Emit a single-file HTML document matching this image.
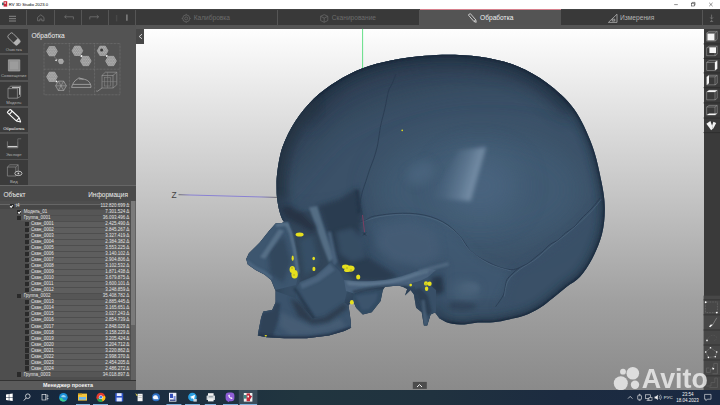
<!DOCTYPE html>
<html lang="ru">
<head>
<meta charset="utf-8">
<title>RV 3D Studio 2023.0</title>
<style>
*{box-sizing:border-box;margin:0;padding:0}
html,body{width:720px;height:405px;overflow:hidden;background:#fff}
body{position:relative;font-family:"Liberation Sans",sans-serif;color:#e6e6e6}
.abs{position:absolute}
#title{left:0;top:0;width:720px;height:9px;background:#fff}
#title .t{position:absolute;left:8.800px;top:1.500px;font-size:4.200px;line-height:6px;color:#000;white-space:nowrap}
#toolbar{left:0;top:8.6px;width:720px;height:16.2px;background:#393939;border-top:0.6px solid #444}
#strip{left:0;top:24.8px;width:720px;height:4.2px;background:#555}
.tb{position:absolute;top:0;height:16.2px;border-right:0.7px solid #555}
.tab{position:absolute;top:0;height:16.2px;border-right:0.7px solid #555;white-space:nowrap}
.tab span{position:absolute;top:4.6px;font-size:6.6px;line-height:8px;color:#6c6c6c}
#leftp{left:0;top:24.8px;width:136px;height:365.4px;background:#535353}
.sb{position:absolute;left:0;width:27.6px;height:24.6px;background:#3b3b3b}
.sb span{position:absolute;left:0;width:27.6px;text-align:center;bottom:1.400px;font-size:4.200px;line-height:5px;color:#b0b0b0;white-space:nowrap}
.sb.act span{color:#ffffff}
#view{left:136px;top:28.8px;width:567.6px;height:361.4px;background:linear-gradient(to bottom,#fefefe 0%,#e5e5e5 19.8%,#c3c3c3 47.5%,#a0a0a0 75.3%,#8a8a8a 100%)}
#rightp{left:703.6px;top:28.8px;width:16.4px;height:361.4px;background:#3a3a3a}
#task{left:0;top:390px;width:720px;height:15px;background:linear-gradient(to right,#15253b 0%,#1b2d40 20%,#21353f 42%,#20323f 60%,#1c2b40 78%,#1a2942 100%)}
/* tree */
#hdr{left:0;top:185.4px;width:136px;height:15.4px;background:#4a4a4a;border-top:0.6px solid #666}
#hdr span{position:absolute;top:4.600px;font-size:6.500px;line-height:8px;color:#ececec}
#treebg{left:0;top:200.8px;width:130.6px;height:179px;background:#4e4e4e}
#scroll{left:130.600px;top:200.800px;width:5.400px;height:179px;background:#626262}
.row{position:absolute;left:0;width:130.6px;height:6.01px;font-size:4.5px;line-height:6px;white-space:nowrap;color:#e4e4e4}
.row.l2:before{content:"";position:absolute;left:28px;right:0.6px;top:0.3px;bottom:0.3px;background:#5e5e5e}
.row.l1:before{content:"";position:absolute;left:21px;right:0.6px;top:0.3px;bottom:0.3px;background:#565656}
.row.l0:before{content:"";position:absolute;left:0;right:0.6px;top:0.3px;bottom:0.3px;background:#474747;border-top:0.5px solid #666}
.row .cb{position:absolute;top:0.900px;width:4.100px;height:4.100px;background:#2a2a2a}
.row .cb.on:after{content:"";position:absolute;left:0.900px;top:0.900px;width:2.200px;height:1.200px;border-left:0.700px solid #fff;border-bottom:0.700px solid #fff;transform:rotate(-45deg)}
.row .nm{position:absolute;top:0}
.row .nu{position:absolute;right:1.4px;top:0}
#mgr{left:0;top:380.4px;width:136px;height:9.8px;background:#5b5b5b;border-top:0.7px solid #333;text-align:center;font-size:5.4px;line-height:9px;font-weight:bold;color:#f4f4f4}
</style>
</head>
<body>
<div id="title" class="abs">
<svg class="abs" style="left:1.600px;top:1px" width="6" height="6" viewBox="0 0 6 6"><rect x="0" y="1.6" width="2.2" height="2.6" fill="#2e7d78"/><rect x="1.6" y="0.2" width="3.6" height="5.4" fill="#c8283a"/><path d="M2.4 1.2h1.6v1.6h-1.6z" fill="#fff" opacity=".8"/></svg>
<span class="t">RV 3D Studio 2023.0</span>
<svg class="abs" style="left:668px;top:0" width="52" height="9" viewBox="0 0 52 9" fill="none" stroke="#333" stroke-width="0.55"><path d="M6.2 4.6h3.6"/><rect x="23.4" y="3.2" width="2.8" height="2.8"/><path d="M24.2 3.2v-0.8h2.8v2.8h-0.8"/><path d="M41.2 2.8l3.4 3.4M44.6 2.8l-3.4 3.4"/></svg>
</div>

<div id="toolbar" class="abs">
<div class="tb" style="left:0;width:27.4px"></div>
<div class="tb" style="left:27.4px;width:27.2px"></div>
<div class="tb" style="left:54.6px;width:27.1px"></div>
<div class="tb" style="left:81.7px;width:27.1px"></div>
<div class="tb" style="left:108.8px;width:27.1px"></div>
<div class="tab" style="left:135.9px;width:141.9px"><span style="left:57.8px">Калибровка</span></div>
<div class="tab" style="left:277.8px;width:141.9px"><span style="left:54px">Сканирование</span></div>
<div class="tab" style="left:419.7px;width:141px;background:#545454;height:20.4px;border-top:0.9px solid #d6808c;top:-0.6px;border-right:none"><span style="left:60.4px;color:#f0f0f0;top:4.4px">Обработка</span></div>
<div class="tab" style="left:560.7px;width:142.4px"><span style="left:59.4px;color:#b4b4b4">Измерения</span></div>
<svg class="abs" style="left:0;top:0" width="720" height="16" viewBox="0 0 720 16" fill="none" stroke="#7a7a7a" stroke-width="0.7">
<path d="M9 6.300h7M9 8.700h7M9 11h7" stroke="#8e8e8e" stroke-width="0.9"/>
<path d="M37.6 10.8v-3.4l3.2-2.6l3.2 2.6v3.4h-2.2v-1.8h-2v1.8z"/>
<path d="M73.4 9.4v-2.6h-8.6M66.4 5.2l-1.8 1.6l1.8 1.6"/>
<path d="M89.8 9.4v-2.6h8.6M96.8 5.2l1.8 1.6l-1.8 1.6"/>
<path d="M116.6 5v6.4" stroke="#484848" stroke-width="1.4"/>
<path d="M126.9 4.6v6.2" stroke="#8c8c8c" stroke-width="1.3"/>
<!-- tab icons -->
<g stroke="#6c6c6c"><circle cx="186.2" cy="8.4" r="3.500"/><circle cx="186.2" cy="8.4" r="1.500"/><path d="M186.2 3.800v1.200M186.2 11.800v1.200M181.600 8.400h1.200M189.600 8.400h1.200"/></g>
<g stroke="#6c6c6c"><path d="M324.2 4.6l3.6 1.7v4.2l-3.6 1.8l-3.6-1.8v-4.2zM320.6 6.3l3.6 1.8l3.6-1.8M324.2 8.1v4.2"/></g>
<g stroke="#e6e6e6" stroke-width="0.8"><path d="M468.6 4.6l1.8-0.9l5.4 6.2l0.4 2.4l-2.2-0.8l-5.4-6.2zM473.8 11.4l1.8-1.4"/></g>
<g stroke="#c0c0c0" stroke-width="0.7"><path d="M608.4 12.4h8.6v-8.2zM612.2 11v-1.8h2.6v1.8z"/></g>
<g stroke="#8c8c8c" stroke-width="0.6"><path d="M711.6 4.6v4M710.2 7.4l1.4 1.6l1.4-1.6M710 11.4h3.2M711.6 9.6v1.8"/></g>
</svg>
</div>
<div id="strip" class="abs"></div>

<div id="leftp" class="abs"></div>
<div id="view" class="abs"></div>

<svg class="abs" style="left:0;top:0" width="720" height="405" viewBox="0 0 720 405">
<defs>
<clipPath id="sk"><path d="M284.0 222.0C283.6 221.3 282.5 220.1 281.7 218.0C280.9 215.9 279.7 212.5 279.0 209.5C278.3 206.5 277.7 203.2 277.3 200.0C276.9 196.8 276.6 194.5 276.6 190.0C276.6 185.5 276.2 180.2 277.2 173.0C278.2 165.8 279.4 155.7 282.5 147.0C285.6 138.3 290.2 129.1 295.5 121.0C300.8 112.9 307.2 105.1 314.0 98.5C320.8 91.9 328.5 86.5 336.5 81.5C344.5 76.5 352.8 72.0 362.0 68.5C371.2 65.0 381.5 62.4 392.0 60.3C402.5 58.2 414.5 56.7 425.0 55.8C435.5 54.9 444.5 54.4 455.0 54.8C465.5 55.2 477.5 56.0 488.0 58.0C498.5 60.0 508.2 62.3 518.0 66.5C527.8 70.7 537.7 75.9 547.0 83.0C556.3 90.1 566.5 98.7 574.0 109.0C581.5 119.3 587.4 132.8 592.0 145.0C596.6 157.2 599.4 171.5 601.5 182.0C603.6 192.5 604.7 199.3 604.8 208.0C604.9 216.7 604.1 225.5 602.0 234.0C599.9 242.5 595.7 251.9 592.0 259.0C588.3 266.1 584.2 272.1 580.0 276.7C575.8 281.3 571.2 283.2 566.7 286.7C562.2 290.2 557.8 294.3 553.3 297.8C548.8 301.3 544.8 304.8 540.0 307.8C535.2 310.8 529.6 313.7 524.4 315.6C519.2 317.5 514.1 318.3 508.9 319.4C503.7 320.5 498.5 321.7 493.3 322.2C488.1 322.7 482.6 322.2 477.8 322.6C473.0 323.0 469.2 324.3 464.4 324.4C459.6 324.4 453.0 323.9 448.9 322.9C444.8 321.9 441.1 319.2 439.5 318.5L435.0 312.5L430.6 314.4L427.2 325.6L423.9 325.6L421.7 312.2L416.1 307.8L413.9 294.4L410.6 290.0L405.0 295.6L407.2 288.9L402.8 286.7L398.3 285.6L385.0 286.7L382.8 290.0L380.6 301.1L371.7 312.2L362.8 314.4L356.1 307.8L352.8 300.0L348.5 305.6L350.6 320.0L351.1 327.8L344.4 331.1L328.9 335.6L306.7 338.2L284.4 338.2L266.7 337.3L257.8 335.6L258.9 328.9L261.1 317.8L263.3 311.6L272.2 310.0L275.6 302.2L275.6 291.1L271.1 280.0L264.4 274.4L255.6 270.0L247.8 264.4L246.2 258.9L248.9 253.3L260.0 242.2L268.9 231.1L275.6 223.5L282.0 223.0Z"/></clipPath>
<filter id="b2" x="-20%" y="-20%" width="140%" height="140%"><feGaussianBlur stdDeviation="2"/></filter>
<filter id="b4" x="-30%" y="-30%" width="160%" height="160%"><feGaussianBlur stdDeviation="4"/></filter>
<filter id="b8" x="-40%" y="-40%" width="180%" height="180%"><feGaussianBlur stdDeviation="8"/></filter>
<filter id="b14" x="-50%" y="-50%" width="200%" height="200%"><feGaussianBlur stdDeviation="14"/></filter>
<filter id="b1" x="-20%" y="-20%" width="140%" height="140%"><feGaussianBlur stdDeviation="0.9"/></filter>
<linearGradient id="zl" x1="0" x2="1"><stop offset="0" stop-color="#555"/><stop offset="0.12" stop-color="#7a70d6"/><stop offset="0.82" stop-color="#7a70d6"/><stop offset="1" stop-color="#555"/></linearGradient>
<filter id="desat" x="0" y="0" width="100%" height="100%" color-interpolation-filters="sRGB"><feColorMatrix type="matrix" values="0.99 0 0 0 0  0 0.945 0 0 0  0 0 0.925 0 0  0 0 0 1 0"/></filter>
</defs>
<path d="M362.6 28.8V69" stroke="#3fd86a" stroke-width="0.8" fill="none"/>
<path d="M178.5 194.7L277 197.4" stroke="url(#zl)" stroke-width="0.8" fill="none"/>
<text x="171.4" y="198.1" font-family="Liberation Sans, sans-serif" font-size="8.4" fill="#444">Z</text>
<g filter="url(#desat)">
<path d="M284.0 222.0C283.6 221.3 282.5 220.1 281.7 218.0C280.9 215.9 279.7 212.5 279.0 209.5C278.3 206.5 277.7 203.2 277.3 200.0C276.9 196.8 276.6 194.5 276.6 190.0C276.6 185.5 276.2 180.2 277.2 173.0C278.2 165.8 279.4 155.7 282.5 147.0C285.6 138.3 290.2 129.1 295.5 121.0C300.8 112.9 307.2 105.1 314.0 98.5C320.8 91.9 328.5 86.5 336.5 81.5C344.5 76.5 352.8 72.0 362.0 68.5C371.2 65.0 381.5 62.4 392.0 60.3C402.5 58.2 414.5 56.7 425.0 55.8C435.5 54.9 444.5 54.4 455.0 54.8C465.5 55.2 477.5 56.0 488.0 58.0C498.5 60.0 508.2 62.3 518.0 66.5C527.8 70.7 537.7 75.9 547.0 83.0C556.3 90.1 566.5 98.7 574.0 109.0C581.5 119.3 587.4 132.8 592.0 145.0C596.6 157.2 599.4 171.5 601.5 182.0C603.6 192.5 604.7 199.3 604.8 208.0C604.9 216.7 604.1 225.5 602.0 234.0C599.9 242.5 595.7 251.9 592.0 259.0C588.3 266.1 584.2 272.1 580.0 276.7C575.8 281.3 571.2 283.2 566.7 286.7C562.2 290.2 557.8 294.3 553.3 297.8C548.8 301.3 544.8 304.8 540.0 307.8C535.2 310.8 529.6 313.7 524.4 315.6C519.2 317.5 514.1 318.3 508.9 319.4C503.7 320.5 498.5 321.7 493.3 322.2C488.1 322.7 482.6 322.2 477.8 322.6C473.0 323.0 469.2 324.3 464.4 324.4C459.6 324.4 453.0 323.9 448.9 322.9C444.8 321.9 441.1 319.2 439.5 318.5L435.0 312.5L430.6 314.4L427.2 325.6L423.9 325.6L421.7 312.2L416.1 307.8L413.9 294.4L410.6 290.0L405.0 295.6L407.2 288.9L402.8 286.7L398.3 285.6L385.0 286.7L382.8 290.0L380.6 301.1L371.7 312.2L362.8 314.4L356.1 307.8L352.8 300.0L348.5 305.6L350.6 320.0L351.1 327.8L344.4 331.1L328.9 335.6L306.7 338.2L284.4 338.2L266.7 337.3L257.8 335.6L258.9 328.9L261.1 317.8L263.3 311.6L272.2 310.0L275.6 302.2L275.6 291.1L271.1 280.0L264.4 274.4L255.6 270.0L247.8 264.4L246.2 258.9L248.9 253.3L260.0 242.2L268.9 231.1L275.6 223.5L282.0 223.0Z" fill="#3c5670"/>
<g clip-path="url(#sk)">
<path d="M270 40H620V120C560 70 420 70 330 130L270 200Z" fill="#33475e" filter="url(#b14)" opacity="0.9"/>
<path d="M300.0 118.0C306.1 111.9 326.2 89.8 336.5 81.5C346.8 73.2 352.8 72.0 362.0 68.5C371.2 65.0 381.5 62.4 392.0 60.3C402.5 58.2 414.5 56.7 425.0 55.8C435.5 54.9 444.5 54.4 455.0 54.8C465.5 55.2 477.5 56.0 488.0 58.0C498.5 60.0 508.2 62.3 518.0 66.5C527.8 70.7 537.7 75.9 547.0 83.0C556.3 90.1 569.5 104.7 574.0 109.0" fill="none" stroke="#26384d" stroke-width="26" filter="url(#b8)" opacity="0.75"/>
<ellipse cx="480" cy="190" rx="105" ry="60" fill="#43607d" filter="url(#b14)" opacity="0.9"/>
<ellipse cx="480" cy="186" rx="40" ry="34" fill="#4e6d8c" filter="url(#b14)" opacity="0.75"/>
<linearGradient id="hl" gradientUnits="userSpaceOnUse" x1="438" y1="171" x2="479" y2="183"><stop offset="0" stop-color="#7c9cba" stop-opacity="0"/><stop offset="0.3" stop-color="#7c9cba" stop-opacity="0.12"/><stop offset="0.6" stop-color="#7c9cba" stop-opacity="0.42"/><stop offset="0.85" stop-color="#7c9cba" stop-opacity="0.8"/><stop offset="1" stop-color="#86a4c0" stop-opacity="0.95"/></linearGradient>
<path d="M458 150L486 147L470.500 201L432 198Z" fill="url(#hl)" filter="url(#b2)"/>
<ellipse cx="421" cy="173" rx="15" ry="11" transform="rotate(-30 421 173)" fill="#4c6a88" filter="url(#b4)" opacity="0.85"/>
<path d="M366 224C400 210 440 214 468 248C480 262 500 268 512 270L505 300L440 300L380 280Z" fill="#43607e" filter="url(#b4)" opacity="0.7"/>
<path d="M600 200C585 225 550 248 520 268C505 280 503 296 496 308L540 312L600 260Z" fill="#3a5470" filter="url(#b4)" opacity="0.8"/>
<ellipse cx="470" cy="288" rx="9" ry="5" fill="#55738f" filter="url(#b2)" opacity="0.85"/>
<ellipse cx="462" cy="306" rx="14" ry="5" fill="#2d435b" filter="url(#b2)" opacity="0.7"/>
<path d="M284.0 222.0C283.6 221.3 282.5 220.1 281.7 218.0C280.9 215.9 279.7 212.5 279.0 209.5C278.3 206.5 277.7 203.2 277.3 200.0C276.9 196.8 276.6 194.5 276.6 190.0C276.6 185.5 276.2 180.2 277.2 173.0C278.2 165.8 279.4 155.7 282.5 147.0C285.6 138.3 290.2 129.1 295.5 121.0C300.8 112.9 307.2 105.1 314.0 98.5C320.8 91.9 328.5 86.5 336.5 81.5C344.5 76.5 352.8 72.0 362.0 68.5C371.2 65.0 381.5 62.4 392.0 60.3C402.5 58.2 414.5 56.7 425.0 55.8C435.5 54.9 444.5 54.4 455.0 54.8C465.5 55.2 477.5 56.0 488.0 58.0C498.5 60.0 508.2 62.3 518.0 66.5C527.8 70.7 537.7 75.9 547.0 83.0C556.3 90.1 566.5 98.7 574.0 109.0C581.5 119.3 587.4 132.8 592.0 145.0C596.6 157.2 599.4 171.5 601.5 182.0C603.6 192.5 604.7 199.3 604.8 208.0C604.9 216.7 604.1 225.5 602.0 234.0C599.9 242.5 595.7 251.9 592.0 259.0C588.3 266.1 584.2 272.1 580.0 276.7C575.8 281.3 571.2 283.2 566.7 286.7C562.2 290.2 557.8 294.3 553.3 297.8C548.8 301.3 544.8 304.8 540.0 307.8C535.2 310.8 529.6 313.7 524.4 315.6C519.2 317.5 514.1 318.3 508.9 319.4C503.7 320.5 498.5 321.7 493.3 322.2C488.1 322.7 482.6 322.2 477.8 322.6C473.0 323.0 469.2 324.3 464.4 324.4C459.6 324.4 453.0 323.9 448.9 322.9C444.8 321.9 441.1 319.2 439.5 318.5L435.0 312.5L430.6 314.4L427.2 325.6L423.9 325.6L421.7 312.2L416.1 307.8L413.9 294.4L410.6 290.0L405.0 295.6L407.2 288.9L402.8 286.7L398.3 285.6L385.0 286.7L382.8 290.0L380.6 301.1L371.7 312.2L362.8 314.4L356.1 307.8L352.8 300.0L348.5 305.6L350.6 320.0L351.1 327.8L344.4 331.1L328.9 335.6L306.7 338.2L284.4 338.2L266.7 337.3L257.8 335.6L258.9 328.9L261.1 317.8L263.3 311.6L272.2 310.0L275.6 302.2L275.6 291.1L271.1 280.0L264.4 274.4L255.6 270.0L247.8 264.4L246.2 258.9L248.9 253.3L260.0 242.2L268.9 231.1L275.6 223.5L282.0 223.0Z" fill="none" stroke="#1f3045" stroke-width="8" filter="url(#b4)" opacity="0.85"/>
<path d="M284.0 222.0C283.6 221.3 282.5 220.1 281.7 218.0C280.9 215.9 279.7 212.5 279.0 209.5C278.3 206.5 277.7 203.2 277.3 200.0C276.9 196.8 276.6 194.5 276.6 190.0C276.6 185.5 276.2 180.2 277.2 173.0C278.2 165.8 279.4 155.7 282.5 147.0C285.6 138.3 290.2 129.1 295.5 121.0C300.8 112.9 307.2 105.1 314.0 98.5C320.8 91.9 328.5 86.5 336.5 81.5C344.5 76.5 352.8 72.0 362.0 68.5C371.2 65.0 381.5 62.4 392.0 60.3C402.5 58.2 414.5 56.7 425.0 55.8C435.5 54.9 444.5 54.4 455.0 54.8C465.5 55.2 477.5 56.0 488.0 58.0C498.5 60.0 508.2 62.3 518.0 66.5C527.8 70.7 537.7 75.9 547.0 83.0C556.3 90.1 566.5 98.7 574.0 109.0C581.5 119.3 587.4 132.8 592.0 145.0C596.6 157.2 599.4 171.5 601.5 182.0C603.6 192.5 604.7 199.3 604.8 208.0C604.9 216.7 604.1 225.5 602.0 234.0C599.9 242.5 595.7 251.9 592.0 259.0C588.3 266.1 584.2 272.1 580.0 276.7C575.8 281.3 571.2 283.2 566.7 286.7C562.2 290.2 557.8 294.3 553.3 297.8C548.8 301.3 544.8 304.8 540.0 307.8C535.2 310.8 529.6 313.7 524.4 315.6C519.2 317.5 514.1 318.3 508.9 319.4C503.7 320.5 498.5 321.7 493.3 322.2C488.1 322.7 482.6 322.2 477.8 322.6C473.0 323.0 469.2 324.3 464.4 324.4C459.6 324.4 453.0 323.9 448.9 322.9C444.8 321.9 441.1 319.2 439.5 318.5" fill="none" stroke="#17263a" stroke-width="2.2" filter="url(#b1)"/>
<path d="M283.0 216.0C282.3 214.8 279.8 211.6 278.9 208.9C277.9 206.2 277.7 203.2 277.3 200.0C276.9 196.8 276.6 194.5 276.6 190.0C276.6 185.5 276.2 180.2 277.2 173.0C278.2 165.8 279.4 155.7 282.5 147.0C285.6 138.3 290.2 129.1 295.5 121.0C300.8 112.9 310.9 102.2 314.0 98.5" fill="none" stroke="#27374a" stroke-width="22" filter="url(#b4)" opacity="0.7"/>
<g fill="none" stroke="#263a52" stroke-width="0.9" stroke-linejoin="round" opacity="0.75">
<path d="M396.0 74.0C395.3 75.7 393.2 81.2 392.0 84.0C390.8 86.8 389.7 87.0 388.5 91.0C387.3 95.0 386.2 102.5 385.0 108.0C383.8 113.5 382.0 119.3 381.0 124.0C380.0 128.7 379.6 132.3 379.0 136.0C378.4 139.7 378.2 142.3 377.4 146.0C376.6 149.7 375.2 154.2 374.0 158.0C372.8 161.8 371.3 164.7 370.0 168.5C368.7 172.3 367.2 177.2 366.0 181.0C364.8 184.8 363.6 187.2 362.6 191.0C361.6 194.8 360.1 200.2 360.0 204.0C359.9 207.8 362.3 211.0 362.0 214.0C361.7 217.0 358.7 220.7 358.0 222.0"/>
<path d="M358.0 222.0C359.0 221.8 361.8 221.8 364.0 221.0C366.2 220.2 368.5 217.9 371.0 217.0C373.5 216.1 375.0 215.9 379.0 215.3C383.0 214.7 389.8 213.8 395.0 213.5C400.2 213.2 405.2 213.1 410.0 213.3C414.8 213.6 419.5 214.1 424.0 215.0C428.5 215.9 433.0 217.3 437.0 219.0C441.0 220.7 444.7 222.7 448.0 225.0C451.3 227.3 454.2 230.3 456.7 232.8C459.2 235.3 461.1 237.4 463.0 240.0C464.9 242.6 466.1 245.6 468.4 248.3C470.7 251.0 473.8 253.7 477.0 256.0C480.2 258.3 484.1 260.2 487.8 262.0C491.5 263.8 495.1 265.7 499.0 267.0C502.9 268.3 507.7 269.5 511.0 269.7C514.3 269.9 517.7 268.3 519.0 268.0"/>
<path d="M600.0 198.0C598.7 199.7 595.2 204.5 592.0 208.0C588.8 211.5 584.0 215.8 581.0 219.0C578.0 222.2 576.6 224.7 574.0 227.0C571.4 229.3 568.3 230.6 565.6 232.8C562.9 235.0 560.6 238.1 558.0 240.0C555.4 241.9 552.7 242.5 550.0 244.5C547.3 246.5 544.6 249.8 542.0 252.0C539.4 254.2 537.0 256.0 534.5 258.0C532.0 260.0 529.6 262.4 527.0 264.0C524.4 265.6 521.5 266.1 519.0 267.8C516.5 269.5 514.0 272.1 512.0 274.0C510.0 275.9 508.2 277.2 507.0 279.5C505.8 281.8 505.6 285.4 505.0 288.0C504.4 290.6 504.4 292.7 503.4 295.0C502.4 297.3 500.3 300.1 499.0 302.0C497.7 303.9 496.2 305.9 495.6 306.7"/>
</g>
<g fill="none" stroke="#56738f" stroke-width="0.7" opacity="0.8">
<path d="M601.0 199.5C599.7 201.2 596.2 206.0 593.0 209.5C589.8 213.0 586.4 216.4 582.0 220.5C577.6 224.6 571.8 229.9 566.6 234.2C561.4 238.4 556.2 241.8 551.0 246.0C545.8 250.2 540.7 255.6 535.5 259.5C530.3 263.4 524.6 265.8 520.0 269.4C515.4 273.0 510.6 276.5 508.0 281.0C505.4 285.5 505.0 293.9 504.4 296.5"/>
<path d="M359.0 223.3C362.5 222.2 371.5 218.1 380.0 216.6C388.5 215.1 400.5 214.0 410.0 214.6C419.5 215.2 429.1 217.1 437.0 220.3C444.9 223.5 452.2 229.1 457.5 234.0C462.8 238.9 463.8 244.7 469.0 249.6C474.2 254.5 481.5 259.8 488.5 263.4C495.5 267.0 507.2 269.7 511.0 271.0"/>
</g>
<path d="M277.0 195.0L300.0 205.0L340.0 200.0L362.0 190.0L366.0 222.0L380.0 250.0L420.0 268.0L445.0 262.0L445.0 345.0L240.0 345.0L240.0 230.0Z" fill="#34506b" filter="url(#b4)" opacity="0.5"/>
<path d="M318.0 206.0L340.0 199.0L357.0 188.0L362.0 214.0L359.0 236.0L366.0 256.0L398.0 276.0L385.0 282.0L356.0 281.0L338.0 264.0L328.0 235.0Z" fill="#2a3f57" filter="url(#b2)" opacity="0.95"/>
<path d="M355.0 190.0L359.0 190.0L361.0 213.0L357.5 214.0Z" fill="#22354b" filter="url(#b1)" opacity="0.7"/>
<path d="M336.0 232.0L352.0 228.0L364.0 240.0L366.0 258.0L352.0 262.0L340.0 254.0Z" fill="#3a5571" filter="url(#b2)" opacity="0.8"/>
<path d="M380.0 228.0L410.0 222.0L436.0 232.0L440.0 256.0L420.0 266.0L392.0 262.0L376.0 246.0Z" fill="#46627f" filter="url(#b4)" opacity="0.8"/>
<path d="M288.0 222.0L300.0 212.0L314.0 210.5L322.0 235.0L331.0 258.0L322.0 277.0L300.0 283.0L297.0 262.0L294.0 240.0Z" fill="#324960" filter="url(#b1)"/>
<path d="M300.0 240.0L312.0 236.0L319.0 262.0L305.0 277.0Z" fill="#39546f" filter="url(#b2)" opacity="0.9"/>
<path d="M246.2 258.9L248.9 253.3L260.0 242.2L268.9 231.1L275.6 223.3L287.8 222.2L292.0 232.0L296.0 250.0L299.0 273.0L296.0 285.0L275.6 290.0L271.1 280.0L264.4 274.4L255.6 270.0L247.8 264.4Z" fill="#3e5b78"/>
<path d="M268.0 250.0L284.0 236.0L291.0 262.0L283.0 283.0L270.0 274.0Z" fill="#314962" filter="url(#b2)" opacity="0.85"/>
<path d="M260.0 257.0L279.0 229.0L284.0 231.0L265.0 259.0Z" fill="#5a7894" filter="url(#b1)" opacity="0.9"/>
<path d="M275.6 223.3L287.8 222.2L289.0 225.5L276.0 227.0Z" fill="#5a7894" filter="url(#b1)" opacity="0.9"/>
<path d="M287.8 222.2L292.0 232.0L296.0 250.0L299.5 273.0L296.5 273.0L293.0 250.0L289.0 233.0L285.0 225.0Z" fill="#5a7894" filter="url(#b1)" opacity="0.9"/>
<path d="M246.2 258.9L247.8 264.4L255.6 270.0L264.4 274.4L271.0 280.0L272.5 277.0L265.0 271.0L256.0 266.5L249.5 261.5Z" fill="#506e8c" filter="url(#b1)" opacity="0.9"/>
<path d="M309.0 207.5L317.0 206.0L322.0 222.0L328.0 240.0L334.5 258.0L329.0 262.0L322.0 244.0L315.0 224.0Z" fill="#55738f" filter="url(#b1)"/>
<path d="M280.5 208.0L288.0 205.5L302.0 213.0L316.0 227.0L313.0 232.5L298.0 224.0L286.0 218.5Z" fill="#25364a" filter="url(#b2)" opacity="0.9"/>
<path d="M327.5 232.0L331.0 231.5L337.5 262.0L333.5 266.0Z" fill="#4b6886" filter="url(#b1)" opacity="0.9"/>
<path d="M295.6 288.9L300.0 282.0L315.6 275.6L331.0 262.0L340.0 272.0L348.0 288.0L344.4 302.2L324.4 315.6L313.3 317.8L295.6 297.8Z" fill="#3c5874"/>
<path d="M300.0 283.5L316.0 276.5L330.0 264.0L335.0 270.0L319.0 281.5L302.0 289.0Z" fill="#4f6d8b" filter="url(#b1)" opacity="0.85"/>
<path d="M293.0 288.0L296.5 288.0L315.5 318.0L311.5 319.5Z" fill="#24374d" filter="url(#b1)" opacity="0.7"/>
<path d="M275.6 291.1L295.0 298.0L313.0 318.5L324.4 315.6L344.4 302.2L348.5 305.6L350.6 320.0L351.1 327.8L344.4 331.1L328.9 335.6L306.7 338.2L284.4 338.2L266.7 337.3L257.8 335.6L258.9 328.9L261.1 317.8L263.3 311.6L272.2 310.0L275.6 302.2Z" fill="#3c5875"/>
<path d="M281.0 312.0L298.0 320.0L316.0 326.0L340.0 318.0L346.0 327.0L320.0 333.5L290.0 335.0L279.0 326.0Z" fill="#48647f" filter="url(#b2)" opacity="0.85"/>
<path d="M290.0 298.0L300.0 303.0L313.0 319.0L325.0 317.0L345.0 303.0L348.0 308.0L328.0 322.0L312.0 324.0L298.0 316.0Z" fill="#2a3b4e" filter="url(#b2)" opacity="0.85"/>
<path d="M258.0 335.0L259.0 329.0L262.0 313.0L272.0 310.5L276.0 302.0L280.5 304.0L278.0 320.0L273.0 336.5Z" fill="#2e455d" filter="url(#b1)" opacity="0.9"/>
<path d="M257.8 334.0L284.0 336.5L307.0 336.5L329.0 334.0L351.0 326.5L351.0 330.0L329.0 337.5L307.0 340.0L284.0 340.0L257.8 337.5Z" fill="#203248" filter="url(#b1)" opacity="0.85"/>
<path d="M353.9 293.3L382.8 290.0L380.6 301.1L371.7 312.2L362.8 314.4L356.1 307.8L352.8 300.0Z" fill="#34506b"/>
<path d="M356.0 296.0L378.0 293.0L376.0 301.0L369.0 309.0L362.0 310.0Z" fill="#3f5c79" filter="url(#b1)" opacity="0.8"/>
<path d="M344 280C356 282 372 281.500 385 280C398 278 408 274.500 414 272L428 268.500L436 270L428 277L420 281L409.400 286.700C398 285 384 286.700 369.400 288.900C362 290.500 358 292 353.900 293.500L346 291Z" fill="#4a6785"/>
<path d="M346 281C358 283 372 282.500 385 281C398 279 408 275.500 416 272.500L428 269.500L428 272.500L416 276C406 280 396 283 385 284.500C372 286 358 286.500 348 285Z" fill="#617f9b" filter="url(#b1)" opacity="0.95"/>
<path d="M432.0 277.0L442.0 276.0L444.0 292.0L436.0 295.0L431.0 288.0Z" fill="#22344a" filter="url(#b2)" opacity="0.85"/>
<path d="M418.0 270.0L432.0 266.0L448.0 262.0L449.0 265.5L433.0 270.0L420.0 274.0Z" fill="#55728e" filter="url(#b1)" opacity="0.8"/>
<path d="M455.0 282.0L468.0 279.0L480.0 286.0L478.0 298.0L462.0 300.0L452.0 292.0Z" fill="#4a6682" filter="url(#b4)" opacity="0.8"/>
<path d="M353.900 293.500C362 291 376 288.500 385 287.200L409 287L409 285.500L385 285.500C374 286.500 362 288.500 352 291Z" fill="#263a50" filter="url(#b1)" opacity="0.8"/>
<path d="M410.6 288.0L414.5 286.0L418.0 300.0L423.0 311.0L424.0 325.6L427.2 325.6L430.6 314.4L436.0 312.2L436.0 290.0L424.0 280.0L412.0 283.0Z" fill="#39546f"/>
<path d="M414.0 290.0L420.0 288.0L428.0 296.0L432.0 312.0L428.0 316.0L423.0 310.0L418.0 300.0Z" fill="#2a3f56" filter="url(#b1)" opacity="0.85"/>
<path d="M421.5 300.0L424.5 300.0L427.5 324.0L424.0 325.0Z" fill="#48647f" filter="url(#b1)" opacity="0.9"/>
<path d="M362.500 215L364.500 232" stroke="#b03a6a" stroke-width="0.6" fill="none"/>
<path d="M363 232.500l3 3m0-3l-3 3" stroke="#1c2a3a" stroke-width="0.6" fill="none"/>
</g>
</g>
<g>
<g fill="#e6e01e">
<ellipse cx="299.6" cy="234.4" rx="4.0" ry="2.0"/>
<ellipse cx="292.7" cy="258.3" rx="1.1" ry="2.7"/>
<ellipse cx="292.3" cy="269.5" rx="2.7" ry="3.5"/>
<ellipse cx="294.6" cy="274.3" rx="3.2" ry="4.3"/>
<ellipse cx="313.7" cy="258.5" rx="1.3" ry="1.8"/>
<ellipse cx="313.9" cy="268.9" rx="1.5" ry="2.2"/>
<ellipse cx="345.5" cy="266.8" rx="3.5" ry="2.2"/>
<ellipse cx="350.3" cy="268.6" rx="4.3" ry="3.1"/>
<ellipse cx="347.0" cy="270.2" rx="3.0" ry="1.8"/>
<ellipse cx="358.2" cy="277.0" rx="2.1" ry="2.6"/>
<ellipse cx="351.8" cy="302.2" rx="1.9" ry="2.2"/>
<ellipse cx="426.0" cy="283.4" rx="2.0" ry="2.2"/>
<ellipse cx="429.6" cy="283.8" rx="2.1" ry="2.2"/>
<ellipse cx="426.6" cy="288.7" rx="1.7" ry="2.3"/>
<ellipse cx="410.7" cy="285.1" rx="1.3" ry="1.3"/>
<ellipse cx="402.2" cy="130.4" rx="0.8" ry="0.8"/>
<ellipse cx="265.8" cy="335.7" rx="1.2" ry="0.7"/>
</g>
<g fill="#8a8a20" opacity="0.8">
<circle cx="292.0" cy="268.0" r="0.7"/>
<circle cx="294.0" cy="275.0" r="0.7"/>
<circle cx="347.0" cy="268.0" r="0.7"/>
<circle cx="351.0" cy="270.0" r="0.7"/>
<circle cx="426.0" cy="284.0" r="0.7"/>
</g>
</g>
</svg>

<!-- collapse tab -->
<div class="abs" style="left:136px;top:28.8px;width:7.8px;height:14.8px;background:#474747"></div>
<svg class="abs" style="left:136px;top:28.8px" width="8" height="15" viewBox="0 0 8 15" fill="none" stroke="#f0f0f0" stroke-width="0.8"><path d="M6 5.2l-2.8 2.3l2.8 2.3"/></svg>

<!-- sidebar -->
<div class="sb abs" style="top:28.8px"><span>Очистка</span></div>
<div class="sb abs" style="top:55px"><span>Совмещение</span></div>
<div class="sb abs" style="top:81.6px"><span>Модель</span></div>
<div class="sb abs act" style="top:107.8px"><span>Обработка</span></div>
<div class="sb abs" style="top:134.2px"><span>Экспорт</span></div>
<div class="sb abs" style="top:160.4px"><span>Вид</span></div>
<svg class="abs" style="left:0;top:0" width="30" height="190" viewBox="0 0 30 190" fill="none" stroke="#9a9a9a" stroke-width="0.7" stroke-linejoin="round">
<!-- eraser -->
<g transform="rotate(45 14 39)"><rect x="7.400" y="35.800" width="13.200" height="6.400" rx="2" stroke="#b4b4b4" stroke-width="0.800"/><path d="M16.200 35.800v6.400h2.400a2 2 0 0 0 2-2v-2.400a2 2 0 0 0-2-2z" fill="#b4b4b4" stroke="none"/></g>
<!-- align square -->
<rect x="8.4" y="59.8" width="11.4" height="11.200" fill="#8e8e8e" stroke="#a8a8a8"/><rect x="10" y="61.400" width="8.2" height="8" fill="#9c9c9c" stroke="none"/>
<!-- model box -->
<rect x="8" y="88.600" width="9.400" height="9.600" stroke="#9c9c9c"/><path d="M10.400 86.200h10.200v10.200M8 88.600l2.400-2.400M17.400 88.600l3.200-2.400M17.400 98.200l3.200-1.800" stroke="#9c9c9c"/><path d="M12 87.400h7.600v7.400" stroke="#c8c8c8" stroke-width="1"/>
<!-- pencil active -->
<g transform="rotate(43 14.600 116.400)" stroke="#fafafa" stroke-width="1.1"><rect x="6.400" y="114.200" width="12.600" height="4.400" rx="0.800"/><path d="M19 114.200l3.800 2.200l-3.800 2.200M9.400 114.200v4.400"/></g>
<!-- export -->
<path d="M7.400 141.400v6.400h10.400v-6.400" stroke="#8c8c8c"/><path d="M7.800 146.600h9.600" stroke="#d0d0d0" stroke-width="1.300"/><path d="M17.800 141.400v-2.600h3.400" stroke="#777"/>
<!-- view -->
<rect x="7.400" y="167" width="8.400" height="9" stroke="#8c8c8c"/><path d="M7.400 167l2.400-2.200h8.400v9l-2.400 2.200M15.800 167l2.400-2.200" stroke="#8c8c8c"/><ellipse cx="18.400" cy="173.400" rx="3.600" ry="2.200" fill="#3b3b3b" stroke="#d8d8d8" stroke-width="0.800"/><circle cx="18.400" cy="173.400" r="0.900" fill="#d8d8d8" stroke="none"/>
</svg>

<div class="abs" style="left:31.4px;top:31.6px;font-size:6.6px;line-height:8px;color:#f0f0f0">Обработка</div>
<svg class="abs" style="left:0;top:0" width="136" height="100" viewBox="0 0 136 100" fill="none">
<g stroke="#8c8c8c" stroke-width="0.5" stroke-dasharray="0.7 0.7"><path d="M44 43.600H120V94.800H44ZM69.400 43.600V94.800M94.600 43.600V94.800M44 69.200H120"/></g>
<path d="M57.4 51.2L54.7 55.9L49.3 55.9L46.6 51.2L49.3 46.5L54.7 46.5Z" fill="#7e7e7e" stroke="#c4c4c4" stroke-width="0.5"/><path d="M48.4 48.1 L55.6 48.1M47.5 49.6 L56.5 49.6M46.6 51.2 L57.4 51.2M47.5 52.8 L56.5 52.8M48.4 54.3 L55.6 54.3M52.9 46.5 L56.5 52.8M51.1 46.5 L55.6 54.3M49.3 46.5 L54.7 55.9M48.4 48.1 L52.9 55.9M47.5 49.6 L51.1 55.9M56.5 49.6 L52.9 55.9M55.6 48.1 L51.1 55.9M54.7 46.5 L49.3 55.9M52.9 46.5 L48.4 54.3M51.1 46.5 L47.5 52.8" stroke="#c4c4c4" stroke-width="0.35" fill="none"/>
<path d="M58.800 58.800l1.800 1.800l-1.800 0.400zM57 61.200l-2.200-0.600l1.600-1.600z" fill="#f0f0f0"/>
<path d="M63.7 61.4L62.4 63.7L59.6 63.7L58.3 61.4L59.6 59.1L62.4 59.1 Z" fill="#a4a4a4" stroke="#c4c4c4" stroke-width="0.400"/>
<path d="M54.500 57l4 3.600" stroke="#e0e0e0" stroke-width="0.5" stroke-dasharray="0.8 0.8"/>
<path d="M82.8 50.8L80.1 55.5L74.7 55.5L72.0 50.8L74.7 46.1L80.1 46.1Z" fill="#7e7e7e" stroke="#c4c4c4" stroke-width="0.5"/><path d="M73.8 47.7 L81.0 47.7M72.9 49.2 L81.9 49.2M72.0 50.8 L82.8 50.8M72.9 52.4 L81.9 52.4M73.8 53.9 L81.0 53.9M78.3 46.1 L81.9 52.4M76.5 46.1 L81.0 53.9M74.7 46.1 L80.1 55.5M73.8 47.7 L78.3 55.5M72.9 49.2 L76.5 55.5M81.9 49.2 L78.3 55.5M81.0 47.7 L76.5 55.5M80.1 46.1 L74.7 55.5M78.3 46.1 L73.8 53.9M76.5 46.1 L72.9 52.4" stroke="#c4c4c4" stroke-width="0.35" fill="none"/>
<path d="M91.2 61.0L88.5 65.7L83.1 65.7L80.4 61.0L83.1 56.3L88.5 56.3Z" fill="#7e7e7e" stroke="#c4c4c4" stroke-width="0.5"/><path d="M82.2 57.9 L89.4 57.9M81.3 59.4 L90.3 59.4M80.4 61.0 L91.2 61.0M81.3 62.6 L90.3 62.6M82.2 64.1 L89.4 64.1M86.7 56.3 L90.3 62.6M84.9 56.3 L89.4 64.1M83.1 56.3 L88.5 65.7M82.2 57.9 L86.7 65.7M81.3 59.4 L84.9 65.7M90.3 59.4 L86.7 65.7M89.4 57.9 L84.9 65.7M88.5 56.3 L83.1 65.7M86.7 56.3 L82.2 64.1M84.9 56.3 L81.3 62.6" stroke="#c4c4c4" stroke-width="0.35" fill="none"/>
<path d="M81 55l1.600 2.200l-2-0.200zM82.400 57l-1.600-2z" fill="#f4f4f4"/><circle cx="81.600" cy="56" r="0.900" fill="#f4f4f4"/>
<path d="M108.0 50.8L105.3 55.5L99.9 55.5L97.2 50.8L99.9 46.1L105.3 46.1Z" fill="#7e7e7e" stroke="#c4c4c4" stroke-width="0.5"/><path d="M99.0 47.7 L106.2 47.7M98.1 49.2 L107.1 49.2M97.2 50.8 L108.0 50.8M98.1 52.4 L107.1 52.4M99.0 53.9 L106.2 53.9M103.5 46.1 L107.1 52.4M101.7 46.1 L106.2 53.9M99.9 46.1 L105.3 55.5M99.0 47.7 L103.5 55.5M98.1 49.2 L101.7 55.5M107.1 49.2 L103.5 55.5M106.2 47.7 L101.7 55.5M105.3 46.1 L99.9 55.5M103.5 46.1 L99.0 53.9M101.7 46.1 L98.1 52.4" stroke="#c4c4c4" stroke-width="0.35" fill="none"/>
<path d="M116.4 61.0L113.7 65.7L108.3 65.7L105.6 61.0L108.3 56.3L113.7 56.3Z" fill="#7e7e7e" stroke="#c4c4c4" stroke-width="0.5"/><path d="M107.4 57.9 L114.6 57.9M106.5 59.4 L115.5 59.4M105.6 61.0 L116.4 61.0M106.5 62.6 L115.5 62.6M107.4 64.1 L114.6 64.1M111.9 56.3 L115.5 62.6M110.1 56.3 L114.6 64.1M108.3 56.3 L113.7 65.7M107.4 57.9 L111.9 65.7M106.5 59.4 L110.1 65.7M115.5 59.4 L111.9 65.7M114.6 57.9 L110.1 65.7M113.7 56.3 L108.3 65.7M111.9 56.3 L107.4 64.1M110.1 56.3 L106.5 62.6" stroke="#c4c4c4" stroke-width="0.35" fill="none"/>
<circle cx="101.600" cy="50" r="1.500" fill="#3a3a3a"/><circle cx="106.800" cy="56" r="0.900" fill="#f4f4f4"/>
<path d="M57.4 76.8L54.7 81.5L49.3 81.5L46.6 76.8L49.3 72.1L54.7 72.1Z" fill="#7e7e7e" stroke="#c4c4c4" stroke-width="0.5"/><path d="M48.4 73.7 L55.6 73.7M47.5 75.2 L56.5 75.2M46.6 76.8 L57.4 76.8M47.5 78.4 L56.5 78.4M48.4 79.9 L55.6 79.9M52.9 72.1 L56.5 78.4M51.1 72.1 L55.6 79.9M49.3 72.1 L54.7 81.5M48.4 73.7 L52.9 81.5M47.5 75.2 L51.1 81.5M56.5 75.2 L52.9 81.5M55.6 73.7 L51.1 81.5M54.7 72.1 L49.3 81.5M52.9 72.1 L48.4 79.9M51.1 72.1 L47.5 78.4" stroke="#c4c4c4" stroke-width="0.35" fill="none"/>
<path d="M66.4 85.8L63.7 90.5L58.3 90.5L55.6 85.8L58.3 81.1L63.7 81.1Z" fill="#5e5e5e" stroke="#c4c4c4" stroke-width="0.500"/><path d="M61 85.800L66.4 85.8M61 85.800L63.7 90.5M61 85.800L58.3 90.5M61 85.800L55.6 85.8M61 85.800L58.3 81.1M61 85.800L63.7 81.1" stroke="#c4c4c4" stroke-width="0.400"/>
<circle cx="56.400" cy="81.400" r="0.900" fill="#f4f4f4"/>
<path d="M71.600 87.400h19.400c0-4.800-3.200-8-8.600-8.400l-3.400-1.200l-1.600 1.200c-3.200 1.800-5 5-5.800 8.400z M73 84.400h17.400M79 79l4.400 0" stroke="#c8c8c8" stroke-width="0.600"/>
<g stroke="#a8a8a8" stroke-width="0.500"><rect x="102" y="75.400" width="11" height="12.600"/><path d="M105.400 72.200h11.400v12.600M102 75.400l3.400-3.200M113 75.400l3.800-3.200M113 88l3.800-3.200"/><rect x="104.600" y="77.400" width="6" height="8.600" stroke="#8a8a8a"/><path d="M107.600 72.200v15.800M102 81.600h14.800" stroke="#8a8a8a"/><path d="M102 88l-4.400 3.200l-1.400-0.200" stroke="#c0c0c0"/></g>
</svg>

<div id="hdr" class="abs"><span style="left:3.4px">Объект</span><span style="left:88.2px">Информация</span></div>
<div id="treebg" class="abs"></div>
<div id="scroll" class="abs"></div><div class="abs" style="left:131.200px;top:201.400px;width:4.200px;height:124px;background:#7a7a7a"></div>
<div class="row l0" style="top:203.30px"><i class="cb on" style="left:9.6px"></i><span class="nm" style="left:15.8px">t4</span><span class="nu">112.820.699 Δ</span></div>
<div class="row l1" style="top:209.31px"><i class="cb on" style="left:17.4px"></i><span class="nm" style="left:23.7px">Модель_01</span><span class="nu">7.301.524 Δ</span></div>
<div class="row l1" style="top:215.32px"><i class="cb" style="left:17.4px"></i><span class="nm" style="left:23.7px">Группа_0001</span><span class="nu">36.093.496 Δ</span></div>
<div class="row l2" style="top:221.33px"><i class="cb" style="left:24.7px"></i><span class="nm" style="left:31.0px">Скан_0001</span><span class="nu">2.425.490 Δ</span></div>
<div class="row l2" style="top:227.34px"><i class="cb" style="left:24.7px"></i><span class="nm" style="left:31.0px">Скан_0002</span><span class="nu">2.845.267 Δ</span></div>
<div class="row l2" style="top:233.35px"><i class="cb" style="left:24.7px"></i><span class="nm" style="left:31.0px">Скан_0003</span><span class="nu">3.327.419 Δ</span></div>
<div class="row l2" style="top:239.36px"><i class="cb" style="left:24.7px"></i><span class="nm" style="left:31.0px">Скан_0004</span><span class="nu">2.384.382 Δ</span></div>
<div class="row l2" style="top:245.37px"><i class="cb" style="left:24.7px"></i><span class="nm" style="left:31.0px">Скан_0005</span><span class="nu">3.553.225 Δ</span></div>
<div class="row l2" style="top:251.38px"><i class="cb" style="left:24.7px"></i><span class="nm" style="left:31.0px">Скан_0006</span><span class="nu">3.140.102 Δ</span></div>
<div class="row l2" style="top:257.39px"><i class="cb" style="left:24.7px"></i><span class="nm" style="left:31.0px">Скан_0007</span><span class="nu">2.904.806 Δ</span></div>
<div class="row l2" style="top:263.40px"><i class="cb" style="left:24.7px"></i><span class="nm" style="left:31.0px">Скан_0008</span><span class="nu">3.102.532 Δ</span></div>
<div class="row l2" style="top:269.41px"><i class="cb" style="left:24.7px"></i><span class="nm" style="left:31.0px">Скан_0009</span><span class="nu">1.871.438 Δ</span></div>
<div class="row l2" style="top:275.42px"><i class="cb" style="left:24.7px"></i><span class="nm" style="left:31.0px">Скан_0010</span><span class="nu">3.679.875 Δ</span></div>
<div class="row l2" style="top:281.43px"><i class="cb" style="left:24.7px"></i><span class="nm" style="left:31.0px">Скан_0011</span><span class="nu">3.600.101 Δ</span></div>
<div class="row l2" style="top:287.44px"><i class="cb" style="left:24.7px"></i><span class="nm" style="left:31.0px">Скан_0012</span><span class="nu">3.248.859 Δ</span></div>
<div class="row l1" style="top:293.45px"><i class="cb" style="left:17.4px"></i><span class="nm" style="left:23.7px">Группа_0002</span><span class="nu">35.408.782 Δ</span></div>
<div class="row l2" style="top:299.46px"><i class="cb" style="left:24.7px"></i><span class="nm" style="left:31.0px">Скан_0013</span><span class="nu">2.885.445 Δ</span></div>
<div class="row l2" style="top:305.47px"><i class="cb" style="left:24.7px"></i><span class="nm" style="left:31.0px">Скан_0014</span><span class="nu">3.165.651 Δ</span></div>
<div class="row l2" style="top:311.48px"><i class="cb" style="left:24.7px"></i><span class="nm" style="left:31.0px">Скан_0015</span><span class="nu">3.027.243 Δ</span></div>
<div class="row l2" style="top:317.49px"><i class="cb" style="left:24.7px"></i><span class="nm" style="left:31.0px">Скан_0016</span><span class="nu">2.854.739 Δ</span></div>
<div class="row l2" style="top:323.50px"><i class="cb" style="left:24.7px"></i><span class="nm" style="left:31.0px">Скан_0017</span><span class="nu">2.848.029 Δ</span></div>
<div class="row l2" style="top:329.51px"><i class="cb" style="left:24.7px"></i><span class="nm" style="left:31.0px">Скан_0018</span><span class="nu">3.158.229 Δ</span></div>
<div class="row l2" style="top:335.52px"><i class="cb" style="left:24.7px"></i><span class="nm" style="left:31.0px">Скан_0019</span><span class="nu">3.205.424 Δ</span></div>
<div class="row l2" style="top:341.53px"><i class="cb" style="left:24.7px"></i><span class="nm" style="left:31.0px">Скан_0020</span><span class="nu">3.204.712 Δ</span></div>
<div class="row l2" style="top:347.54px"><i class="cb" style="left:24.7px"></i><span class="nm" style="left:31.0px">Скан_0021</span><span class="nu">3.220.862 Δ</span></div>
<div class="row l2" style="top:353.55px"><i class="cb" style="left:24.7px"></i><span class="nm" style="left:31.0px">Скан_0022</span><span class="nu">2.998.370 Δ</span></div>
<div class="row l2" style="top:359.56px"><i class="cb" style="left:24.7px"></i><span class="nm" style="left:31.0px">Скан_0023</span><span class="nu">2.454.205 Δ</span></div>
<div class="row l2" style="top:365.57px"><i class="cb" style="left:24.7px"></i><span class="nm" style="left:31.0px">Скан_0024</span><span class="nu">2.486.272 Δ</span></div>
<div class="row l1" style="top:371.58px"><i class="cb" style="left:17.4px"></i><span class="nm" style="left:23.7px">Группа_0003</span><span class="nu">34.018.897 Δ</span></div>
<div id="mgr" class="abs">Менеджер проекта</div>

<div id="rightp" class="abs"></div>
<svg class="abs" style="left:0;top:0" width="720" height="405" viewBox="0 0 720 405" fill="none">
<path d="M703.600 43.9H720" stroke="#2c2c2c" stroke-width="0.900"/>
<path d="M703.600 58.4H720" stroke="#2c2c2c" stroke-width="0.900"/>
<path d="M703.600 72.9H720" stroke="#2c2c2c" stroke-width="0.900"/>
<path d="M703.600 87.7H720" stroke="#2c2c2c" stroke-width="0.900"/>
<path d="M703.600 102.9H720" stroke="#2c2c2c" stroke-width="0.900"/>
<path d="M703.600 118.0H720" stroke="#2c2c2c" stroke-width="0.900"/>
<path d="M703.600 132.6H720" stroke="#2c2c2c" stroke-width="0.900"/>
<g stroke="#9a9a9a" stroke-width="0.600"><rect x="706.8" y="33.0" width="8.2" height="8.0"/><path d="M706.8 33.0l2.2 -1.6h8.2v8.0l-2.2 1.6M715.0 33.0l2.2 -1.6"/></g><rect x="707.4" y="33.6" width="7.0" height="6.8" fill="#f4f4f4"/>
<g stroke="#9a9a9a" stroke-width="0.600"><rect x="706.8" y="47.8" width="8.2" height="8.0"/><path d="M706.8 47.8l2.2 -1.6h8.2v8.0l-2.2 1.6M715.0 47.8l2.2 -1.6"/></g><rect x="709.4" y="47.4" width="6.6" height="5.6" fill="#f4f4f4"/>
<g stroke="#9a9a9a" stroke-width="0.600"><rect x="706.8" y="62.3" width="8.2" height="8.0"/><path d="M706.8 62.3l2.2 -1.6h8.2v8.0l-2.2 1.6M715.0 62.3l2.2 -1.6"/></g><path d="M715.0 62.3l2.2 -1.6v8.0l-2.2 1.6z" fill="#f4f4f4"/>
<g stroke="#9a9a9a" stroke-width="0.600"><rect x="706.8" y="76.9" width="8.2" height="8.0"/><path d="M706.8 76.9l2.2 -1.6h8.2v8.0l-2.2 1.6M715.0 76.9l2.2 -1.6"/></g><path d="M706.8 76.9l2.2 -1.6v8.0l-2.2 1.6z" fill="#f4f4f4"/>
<g stroke="#9a9a9a" stroke-width="0.600"><rect x="706.8" y="91.9" width="8.2" height="8.0"/><path d="M706.8 91.9l2.2 -1.6h8.2v8.0l-2.2 1.6M715.0 91.9l2.2 -1.6"/></g><path d="M706.8 91.9l2.2 -1.6h8.2l-2.2 1.6z" fill="#f4f4f4"/>
<g stroke="#9a9a9a" stroke-width="0.600"><rect x="706.8" y="107.0" width="8.2" height="8.0"/><path d="M706.8 107.0l2.2 -1.6h8.2v8.0l-2.2 1.6M715.0 107.0l2.2 -1.6"/></g><path d="M706.8 115.0l2.2 -1.6h8.2l-2.2 1.6z" fill="#f4f4f4"/>
<path d="M706.400 123.7l4 -2.600l2.600 7.400l-1.800 1.800z" fill="#f4f4f4"/><path d="M713.400 121.7l2.800 1.400l-3 5.600l-1.200-2.800z" fill="#f4f4f4"/>
<rect x="703.600" y="295.600" width="16.400" height="94.600" fill="#474747"/>
<path d="M703.600 299.8H720" stroke="#363636" stroke-width="1.100"/>
<path d="M703.600 314.8H720" stroke="#363636" stroke-width="1.100"/>
<path d="M703.600 330.0H720" stroke="#363636" stroke-width="1.100"/>
<path d="M703.600 345.0H720" stroke="#363636" stroke-width="1.100"/>
<path d="M703.600 360.0H720" stroke="#363636" stroke-width="1.100"/>
<path d="M703.600 375.8H720" stroke="#363636" stroke-width="1.100"/>
<rect x="705.400" y="302" width="12" height="10.600" stroke="#8a8a8a" stroke-width="0.500" stroke-dasharray="0.800 0.800"/><circle cx="705.700" cy="302.200" r="0.900" fill="#fff"/><circle cx="716.800" cy="312.600" r="0.900" fill="#fff"/>
<path d="M716.800 317.800l-4.400 7.400" stroke="#8c8c8c" stroke-width="0.800"/><path d="M712.800 324.800l-2.600 2.400l-1.200-0.600l1.800-2.200z" fill="#fff"/>
<path d="M707 340.400c1-4 5-6 8-4.800c2.400 1.200 1.800 4.400-1 5" stroke="#5e5e5e" stroke-width="0.600" stroke-dasharray="0.800 0.800"/><circle cx="707" cy="340.400" r="0.900" fill="#e8e8e8"/>
<path d="M710.500 347.800L716.700 352L715.300 356.700L708.400 357.400L705.700 352Z" stroke="#a0a0a0" stroke-width="0.500" stroke-dasharray="0.800 0.600"/>
<circle cx="710.5" cy="347.8" r="0.800" fill="#fff"/>
<circle cx="716.7" cy="352.0" r="0.800" fill="#fff"/>
<circle cx="715.3" cy="356.7" r="0.800" fill="#fff"/>
<circle cx="708.4" cy="357.4" r="0.800" fill="#fff"/>
<circle cx="705.7" cy="352.0" r="0.800" fill="#fff"/>
<path d="M706.400 372.400h4v-3.400h3.400v-5.600h3.600v10.400h-5M706.400 372.400v-4.400h3" stroke="#6c6c6c" stroke-width="0.600"/><path d="M712 367.600l2.400 0.600l-1.400 1.800z" fill="#fff"/>
<path d="M706.400 386h4.600v-3.400h3.800v-4.600h2.600v9.600h-8" stroke="#646464" stroke-width="0.600"/>
</svg>

<svg class="abs" style="left:0;top:0" width="720" height="405" viewBox="0 0 720 405">
<g fill="#efefef" opacity="0.82">
<circle cx="620.800" cy="383.300" r="7"/><circle cx="632.800" cy="373.300" r="6.300"/><circle cx="623" cy="371.700" r="2.900"/><circle cx="635" cy="384.700" r="4.200"/>
<text x="641.800" y="388.400" font-family="Liberation Sans, sans-serif" font-weight="bold" font-size="27.800" textLength="66" lengthAdjust="spacingAndGlyphs">Avito</text>
</g>
</svg>

<div id="task" class="abs"></div>
<svg class="abs" style="left:0;top:0" width="720" height="405" viewBox="0 0 720 405" fill="none">
<rect x="238.800" y="390" width="18.600" height="15" fill="#3a4d5b"/>
<rect x="76.0" y="404" width="14.0" height="1" fill="#7fb2dc"/>
<rect x="93.0" y="404" width="15.0" height="1" fill="#7fb2dc"/>
<rect x="166.4" y="404" width="15.0" height="1" fill="#7fb2dc"/>
<rect x="185.0" y="404" width="15.0" height="1" fill="#7fb2dc"/>
<rect x="204.8" y="404" width="11.2" height="1" fill="#7fb2dc"/>
<rect x="223.0" y="404" width="15.0" height="1" fill="#7fb2dc"/>
<rect x="239.8" y="404" width="17.2" height="1" fill="#7fb2dc"/>
<path d="M6 394.400l2.800-0.400v3h-2.800zM9.300 393.900l3.400-0.500v3.600h-3.400zM6 397.500h2.800v3l-2.800-0.400zM9.300 397.500h3.400v3.600l-3.400-0.500z" fill="#fff"/>
<circle cx="27.800" cy="396.200" r="2.300" stroke="#fff" stroke-width="0.700"/><path d="M26.200 398l-2.400 2.600" stroke="#fff" stroke-width="0.800"/>
<rect x="42" y="394.600" width="3.800" height="5.400" stroke="#fff" stroke-width="0.600"/><path d="M47 394.200v6.200M47 396h1.600M47 398.600h1.600" stroke="#fff" stroke-width="0.600"/>
<circle cx="63.400" cy="397.200" r="4.300" fill="#1b8fd6"/><path d="M59.200 398.400a4.300 4.300 0 0 0 7.400 1.600c-2.200 0.800-4.600-0.400-4.400-2.400z" fill="#3fd08a"/><path d="M61 396.600a2.600 2.600 0 0 1 5 0.600h-3.400z" fill="#d6f0ff" opacity="0.700"/>
<rect x="78" y="393.600" width="9" height="7" fill="#f4c53c"/><rect x="78" y="393.600" width="4" height="1.400" fill="#d9a520"/><rect x="79" y="397" width="7" height="2.600" fill="#6fb7ee"/>
<circle cx="100.800" cy="397.200" r="4.400" fill="#e33b2e"/><path d="M100.800 397.200L97 399.400a4.400 4.400 0 0 0 5.800 2z" fill="#2ea44f"/><path d="M100.800 397.200l2 4.200a4.400 4.400 0 0 0 2.200-5.600z" fill="#fbc116"/><circle cx="100.800" cy="397.200" r="1.900" fill="#fff"/><circle cx="100.800" cy="397.200" r="1.400" fill="#3b7ded"/>
<rect x="115.200" y="393.200" width="8" height="8.200" fill="#2f55c8"/><rect x="116.800" y="393.200" width="4.800" height="2.800" fill="#e8ecff"/><rect x="116.600" y="397.600" width="5.200" height="3.800" fill="#dfe6ff"/>
<rect x="137.600" y="393.800" width="5" height="7.400" fill="#f2f2f2"/><path d="M135.400 393l2.600 2.400l-1.600 0.400z" fill="#e8d94a"/><rect x="138.400" y="395.400" width="3.400" height="0.500" fill="#999"/><rect x="138.400" y="397" width="3.400" height="0.500" fill="#999"/>
<circle cx="156" cy="397.200" r="4" fill="#2d6fc4"/><path d="M153 397.600a2.400 2.400 0 0 1 4.600-1l1 2.600h-5z" fill="#f4f8ff"/>
<rect x="169" y="392.800" width="7.400" height="8.800" fill="#eef0f8"/><rect x="170" y="393.800" width="3" height="4.200" fill="#3450b8"/><rect x="173.600" y="396" width="2" height="3.600" fill="#7d8fd8"/><rect x="169.800" y="399.600" width="5.800" height="1.200" fill="#23347a"/>
<circle cx="192.400" cy="397" r="4.300" fill="#2b9fe0"/><path d="M189.800 397l5.200-2.200l-0.900 4.800l-1.800-1.400l-0.900 0.900v-1.500z" fill="#fff"/><rect x="193.400" y="399" width="3.400" height="2.600" fill="#c9d4dc"/>
<rect x="206.600" y="395.400" width="8.400" height="4.600" rx="0.600" fill="#cfd4d8"/><rect x="208" y="393.200" width="5.600" height="2.600" fill="#f4f4f4"/><rect x="208" y="398.400" width="5.600" height="3" fill="#eef0f0"/><rect x="208.800" y="396.400" width="4" height="0.800" fill="#7d8a92"/>
<rect x="225.600" y="392.600" width="8.800" height="8.600" rx="3.200" fill="#8f5fd7"/><path d="M227.400 400.400l0.600 1.800l1.800-1.400z" fill="#8f5fd7"/><path d="M228.200 395.200c0.400 2 1.600 3.400 3.600 3.800l0.800-0.800l-1-0.900l-0.600 0.400c-0.800-0.400-1.200-0.900-1.500-1.600l0.500-0.500l-0.800-1.100z" fill="#fff"/>
<rect x="243.800" y="393" width="8.600" height="8.600" fill="#f0f0f0"/><rect x="243.800" y="395" width="3" height="3.600" fill="#3b8a84"/><rect x="246.600" y="393.400" width="3.400" height="7.800" fill="#c42b3b"/><path d="M249.800 395l2.200 1.200l-2 3.400z" fill="#b0203a"/><rect x="247.400" y="395.600" width="1.600" height="1.800" fill="#fff"/>
<path d="M628 398.600l2.200-2.200l2.200 2.200" stroke="#f2f2f2" stroke-width="0.700"/>
<rect x="637.800" y="395.800" width="3.600" height="3.400" stroke="#f2f2f2" stroke-width="0.600"/><path d="M638.600 394.600h2M638.600 400.400h2M639.600 393.800v0.800" stroke="#f2f2f2" stroke-width="0.600"/>
<rect x="645.400" y="394.800" width="5.200" height="3.800" stroke="#f2f2f2" stroke-width="0.600"/><path d="M646.600 400.400h3.600M648 398.600v1.800" stroke="#f2f2f2" stroke-width="0.600"/><rect x="649" y="397.400" width="3" height="3.200" fill="#1c2b40" stroke="#f2f2f2" stroke-width="0.500"/>
<path d="M654.600 396.400h1.400l1.800-1.600v5.200l-1.800-1.600h-1.400z" fill="#f2f2f2"/><path d="M659 395.600a2.400 2.400 0 0 1 0 3.400M660.200 394.600a3.800 3.800 0 0 1 0 5.400" stroke="#f2f2f2" stroke-width="0.500"/>
<path d="M704.600 394.400h6.400v4.800h-3.600l-1.400 1.400v-1.400h-1.400z" stroke="#f2f2f2" stroke-width="0.600"/>
<g font-family="Liberation Sans, sans-serif" fill="#f4f4f4" text-anchor="middle"><text x="668.200" y="399" font-size="4.400">РУС</text><text x="687.800" y="395.600" font-size="4.500">23:54</text><text x="687.600" y="402.200" font-size="4.500">18.04.2023</text></g>
<rect x="412.800" y="381.900" width="14" height="7" fill="#4c4c4c"/><path d="M417 387l2.500-2.400l2.500 2.400" stroke="#fff" stroke-width="0.900"/>
</svg>
</body>
</html>
